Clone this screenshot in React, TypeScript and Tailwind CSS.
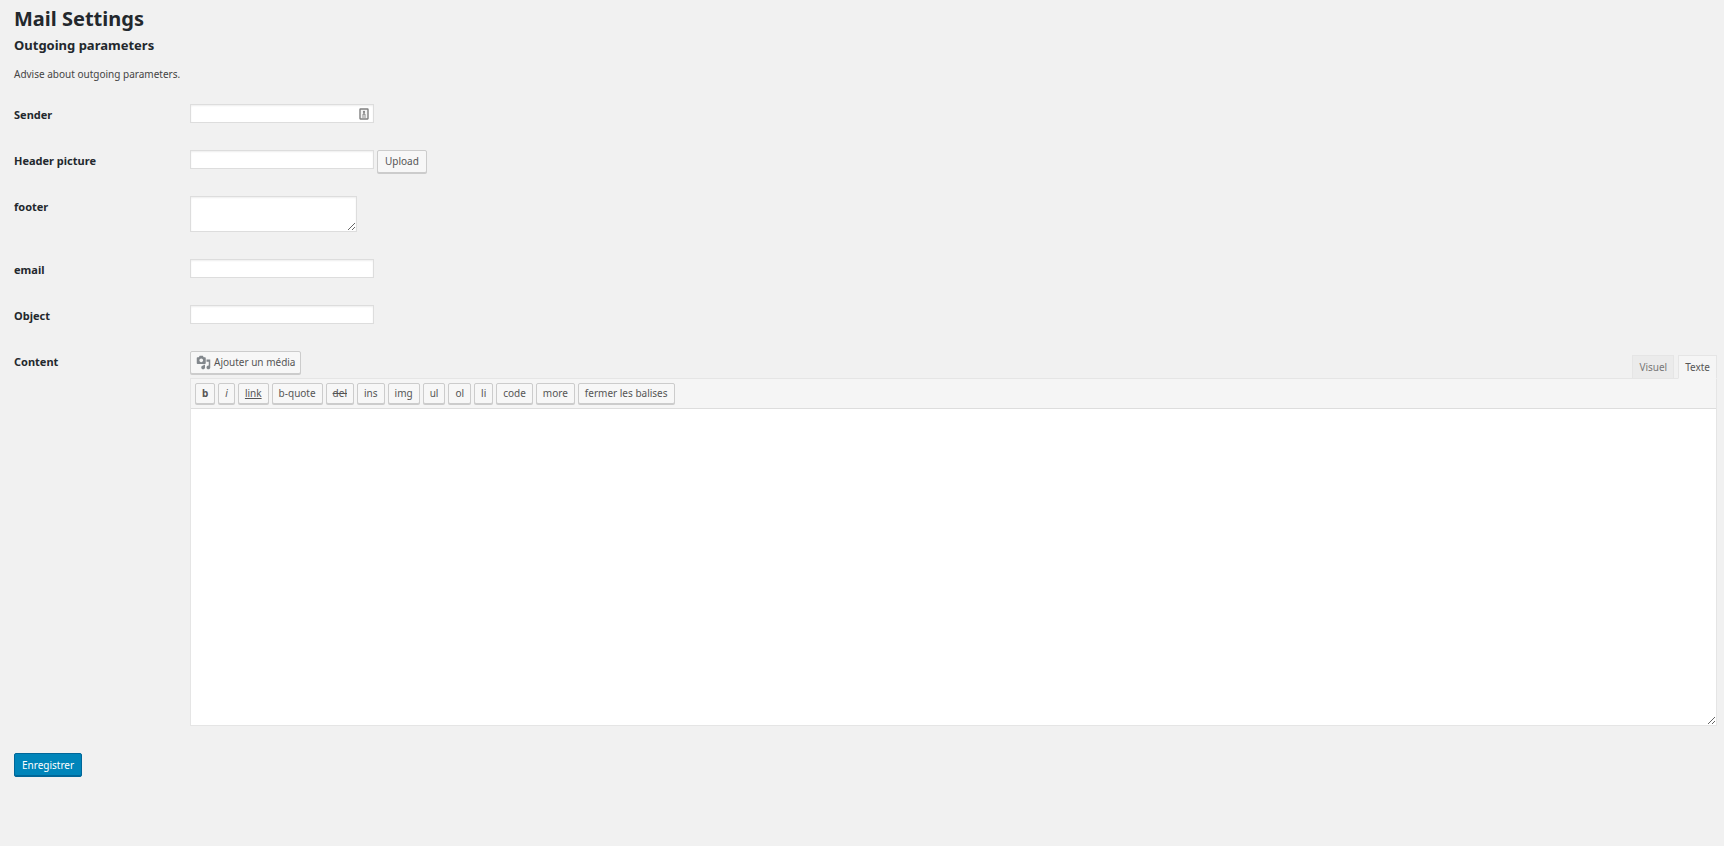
import { useState } from "react";
import type { ReactNode } from "react";

const buttonClass =
  "inline-flex items-center rounded-[2px] border border-[#ccc] bg-[#f7f7f7] text-[#555] shadow-[0_1px_0_#ccc]";

const inputClass =
  "h-[19px] w-[184px] border border-[#ddd] bg-white px-1 text-[#32373c] shadow-[inset_0_1px_2px_rgba(0,0,0,0.07)]";

const quicktags = [
  { label: "b", className: "font-bold" },
  { label: "i", className: "italic" },
  { label: "link", className: "underline" },
  { label: "b-quote", className: "" },
  { label: "del", className: "line-through" },
  { label: "ins", className: "" },
  { label: "img", className: "" },
  { label: "ul", className: "" },
  { label: "ol", className: "" },
  { label: "li", className: "" },
  { label: "code", className: "" },
  { label: "more", className: "" },
  { label: "fermer les balises", className: "" },
];

function MediaIcon() {
  return (
    <svg viewBox="0 0 20 20" className="h-[15px] w-[15px] fill-[#82878c]" aria-hidden="true">
      <path d="M13 11V4c0-.55-.45-1-1-1h-1.67L9 1H5L3.67 3H2c-.55 0-1 .45-1 1v7c0 .55.45 1 1 1h10c.55 0 1-.45 1-1zM7 4.5c1.38 0 2.5 1.12 2.5 2.5S8.38 9.5 7 9.5 4.5 8.38 4.5 7 5.62 4.5 7 4.5zM14 6h5v10.5c0 1.38-1.12 2.5-2.5 2.5S14 17.88 14 16.5s1.12-2.5 2.5-2.5c.17 0 .34.02.5.05V9h-3V6zm-4 8.05V13h2v3.5c0 1.38-1.12 2.5-2.5 2.5S7 17.88 7 16.5 8.12 14 9.5 14c.17 0 .34.02.5.05z" />
    </svg>
  );
}

function AutofillIcon() {
  return (
    <svg
      viewBox="0 0 10 12"
      className="pointer-events-none absolute top-1 right-[5px] h-3 w-[10px]"
      aria-hidden="true"
    >
      <rect x="1" y="1" width="8" height="10" rx="0.4" fill="#f4f4f4" stroke="#808080" strokeWidth="1.4" />
      <circle cx="5" cy="3.9" r="1.1" fill="#808080" />
      <path d="M4.2 4.6h1.6v1.8H4.2zM3 6.6h4v.9H3zM3 8.5h4v.9H3z" fill="#909090" />
    </svg>
  );
}

function FormRow({ id, label, children }: { id: string; label: string; children: ReactNode }) {
  return (
    <div className="flex min-h-[46px]">
      <label htmlFor={id} className="w-44 shrink-0 pt-4 text-[11px] leading-[14px] font-bold text-[#23282d]">
        {label}
      </label>
      <div className="min-w-0 flex-1 pt-3">{children}</div>
    </div>
  );
}

export default function App() {
  const [mode, setMode] = useState("text");

  const tabClass = "h-6 border border-[#e5e5e5] px-[6px] text-[10px]";

  return (
    <div className="min-h-screen bg-[#f1f1f1] pr-[7px] pl-[14px] font-['Noto_Sans','Open_Sans',sans-serif] text-[10px] text-[#444]">
      <h1 className="pt-[7px] text-[20px] leading-6 font-bold text-[#23282d]">Mail Settings</h1>
      <h2 className="pt-1 text-[13px] leading-5 font-bold text-[#23282d]">Outgoing parameters</h2>
      <p className="pt-3 pb-[11px] leading-[14px]">Advise about outgoing parameters.</p>

      <form onSubmit={(e) => e.preventDefault()}>
        <FormRow id="sender" label="Sender">
          <div className="relative w-[184px]">
            <input id="sender" type="text" className={`block ${inputClass}`} />
            <AutofillIcon />
          </div>
        </FormRow>
        <FormRow id="header-picture" label="Header picture">
          <div className="flex items-start gap-[3px]">
            <input id="header-picture" type="text" className={inputClass} />
            <button type="button" className={`h-[23px] px-[7px] ${buttonClass}`}>
              Upload
            </button>
          </div>
        </FormRow>
        <FormRow id="footer" label="footer">
          <textarea
            id="footer"
            className="mb-[15px] block h-9 w-[167px] resize border border-[#ddd] bg-white px-1 shadow-[inset_0_1px_2px_rgba(0,0,0,0.07)]"
          />
        </FormRow>
        <FormRow id="email" label="email">
          <input id="email" type="text" className={`block ${inputClass}`} />
        </FormRow>
        <FormRow id="object" label="Object">
          <input id="object" type="text" className={`block ${inputClass}`} />
        </FormRow>
        <FormRow id="content" label="Content">
          <div className="flex items-start justify-between">
            <button type="button" className={`h-[23px] gap-[3px] px-[5px] ${buttonClass}`}>
              <MediaIcon />
              Ajouter un média
            </button>
            <div className="flex gap-1 pt-1">
              <button
                type="button"
                onClick={() => setMode("visual")}
                className={`${tabClass} ${mode === "visual" ? "border-b-[#f5f5f5] bg-[#f5f5f5] text-[#555]" : "bg-[#ebebeb] text-[#777]"}`}
              >
                Visuel
              </button>
              <button
                type="button"
                onClick={() => setMode("text")}
                className={`${tabClass} ${mode === "text" ? "border-b-[#f5f5f5] bg-[#f5f5f5] text-[#555]" : "bg-[#ebebeb] text-[#777]"}`}
              >
                Texte
              </button>
            </div>
          </div>
          {/* the selected tab covers the top border of the editor */}
          <div className="-mt-px border border-[#e5e5e5]">
            <div className="flex flex-wrap gap-[3px] border-b border-[#ddd] bg-[#f5f5f5] p-1">
              {quicktags.map((tag) => (
                <button key={tag.label} type="button" className={`h-[21px] px-[6px] ${buttonClass} ${tag.className}`}>
                  {tag.label}
                </button>
              ))}
            </div>
            <textarea id="content" className="block h-[316px] w-full resize-y bg-white p-2" />
          </div>
        </FormRow>
        <button
          type="submit"
          className="mt-[27px] h-6 rounded-[2px] border border-[#006799] bg-[#0085ba] px-[7px] text-white shadow-[inset_0_-1px_0_#006799]"
        >
          Enregistrer
        </button>
      </form>
    </div>
  );
}
